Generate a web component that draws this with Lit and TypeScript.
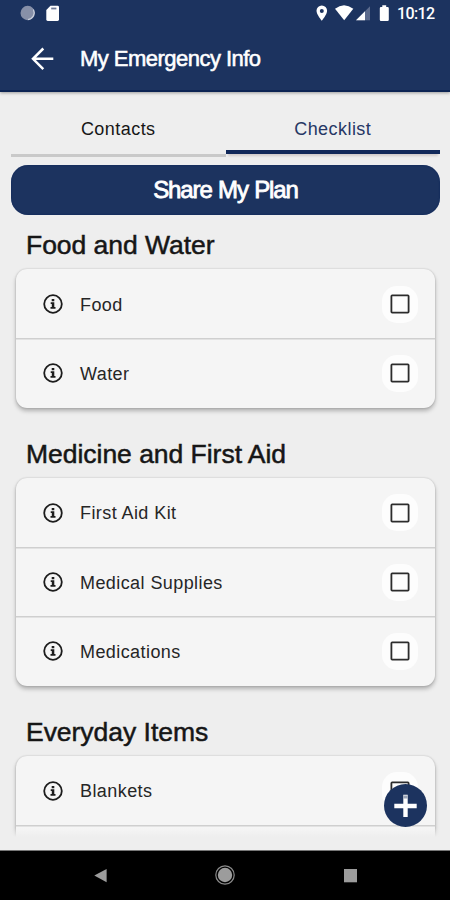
import { LitElement, html, css } from "lit";
import { customElement, property } from "lit/decorators.js";

interface Section {
  title: string;
  items: string[];
}

const SECTIONS: Section[] = [
  { title: "Food and Water", items: ["Food", "Water"] },
  { title: "Medicine and First Aid", items: ["First Aid Kit", "Medical Supplies", "Medications"] },
  { title: "Everyday Items", items: ["Blankets", ""] },
];

@customElement("status-bar")
export class StatusBar extends LitElement {
  static styles = css`
    :host {
      display: flex;
      justify-content: space-between;
      height: 27px;
      color: #fff;
      font: 500 16px/27px Roboto, sans-serif;
    }
    svg { display: block; }
    .right { display: flex; padding-right: 16px; }
    .time { width: 37px; letter-spacing: -0.6px; white-space: nowrap; }
  `;
  render() {
    return html`
      <svg width="80" height="27" viewBox="0 0 80 27">
        <circle cx="27.7" cy="13" r="7.2" fill="#8790a8" />
        <path d="M33.4 9.5A7 7 0 0 1 28 19.6" fill="none" stroke="#c9cedb" stroke-width="1.3" />
        <path d="M50.5 5.8H57.6Q59 5.8 59 7.2V19.6Q59 21 57.6 21H47.7Q46.3 21 46.3 19.6V10Z" fill="#fff" />
        <path d="M51.2 8.5H56.4" stroke="#6f7a96" stroke-width="1.8" />
      </svg>
      <div class="right">
        <svg width="82" height="27" viewBox="315 0 82 27">
          <path fill="#fff" fill-rule="evenodd" d="M321.8 5.5A5.3 5.3 0 0 1 327.1 10.8C327.1 14.6 321.8 20.7 321.8 20.7S316.5 14.6 316.5 10.8A5.3 5.3 0 0 1 321.8 5.5ZM321.8 8.9A2 2 0 1 0 321.8 12.9A2 2 0 1 0 321.8 8.9Z" />
          <path fill="#fff" d="M335 8.8Q344 1.8 353.3 8.8L344.2 20.3Z" />
          <path fill="#5c6b8d" d="M370 6.3V20.3H356Z" />
          <path fill="#fff" d="M365 11.3V20.3H356Z" />
          <path fill="#fff" d="M382.3 5.3H386.2V7H387.6Q388.8 7 388.8 8.2V19.8Q388.8 21 387.6 21H381Q379.8 21 379.8 19.8V8.2Q379.8 7 381 7H382.3Z" />
        </svg>
        <span class="time">10:12</span>
      </div>
    `;
  }
}

@customElement("check-row")
export class CheckRow extends LitElement {
  @property() label = "";
  static styles = css`
    :host {
      display: flex;
      align-items: center;
      box-sizing: border-box;
      height: 69.33px;
      padding: 1px 17px 0 27px;
      color: #262626;
      font: 18px "Liberation Sans", Arial, sans-serif;
      letter-spacing: 0.42px;
    }
    .label { flex: 1; padding: 2px 0 0 17px; }
    svg { display: block; }
    .check {
      display: grid;
      place-items: center;
      width: 36px;
      height: 37px;
      border-radius: 15px;
      background: #fdfdfd;
    }
  `;
  render() {
    return html`
      <svg width="20" height="20" viewBox="0 0 20 20">
        <circle cx="10" cy="10" r="8.8" fill="none" stroke="#1c1c1c" stroke-width="1.8" />
        <path d="M8.7 5H11.3V7.2H8.7ZM7.7 8.2H11.3V13H12.5V14.8H7.5V13H8.8V10H7.7Z" fill="#1c1c1c" />
      </svg>
      <span class="label">${this.label}</span>
      <span class="check">
        <svg width="20" height="20" viewBox="0 0 20 20">
          <rect x="1.4" y="1.4" width="17.2" height="17.2" rx="0.8" fill="none" stroke="#2c2c2c" stroke-width="1.8" />
        </svg>
      </span>
    `;
  }
}

@customElement("app-root")
export class AppRoot extends LitElement {
  static styles = css`
    :host {
      display: flex;
      flex-direction: column;
      position: relative;
      width: 450px;
      height: 900px;
      overflow: hidden;
      background: #eee;
      color: #161616;
      font-family: "Liberation Sans", Arial, sans-serif;
    }
    svg { display: block; }
    .header {
      flex: none;
      height: 92px;
      box-sizing: border-box;
      background: #1c335f;
      border-bottom: 2px solid #0c2453;
      box-shadow: 0 1px 3px rgba(0, 0, 0, 0.35);
    }
    .toolbar {
      display: flex;
      align-items: center;
      height: 63px;
      padding-left: 31px;
      color: #fff;
    }
    .title {
      padding: 1px 0 0 25px;
      font-size: 22px;
      letter-spacing: -0.53px;
      -webkit-text-stroke: 0.55px #fff;
    }
    .tabs {
      flex: none;
      display: flex;
      height: 65px;
      margin: 0 10px 0 11px;
    }
    .tab {
      flex: 1;
      box-sizing: border-box;
      padding-top: 5px;
      border-bottom: 3px solid #c9c9c9;
      text-align: center;
      font-size: 18px;
      line-height: 64px;
      letter-spacing: 0.45px;
    }
    .tab.active {
      height: 62px;
      border-bottom: 4px solid #12295a;
      color: #263765;
      box-shadow: 0 4px 2px -2px rgba(70, 30, 30, 0.16);
    }
    .share {
      flex: none;
      display: grid;
      place-items: center;
      height: 50px;
      margin: 8px 10px 0 11px;
      border-radius: 17px;
      background: #1c335f;
      box-shadow: inset 0 0 2px #0a2358;
      color: #fff;
      font-size: 24px;
      letter-spacing: -1.1px;
      word-spacing: 0.8px;
      -webkit-text-stroke: 0.8px #fff;
    }
    .list {
      height: 622px;
      flex: none;
      overflow: hidden;
      padding: 0 15px 0 16px;
      position: relative;
    }
    .list::after {
      content: "";
      position: absolute;
      left: 0;
      right: 0;
      bottom: 0;
      height: 9px;
      background: linear-gradient(rgba(238, 238, 238, 0), #eee);
    }
    .heading {
      height: 54px;
      box-sizing: border-box;
      padding: 1px 0 0 10px;
      font-size: 26.5px;
      line-height: 58px;
      letter-spacing: -0.03px;
      white-space: nowrap;
      -webkit-text-stroke: 0.5px #161616;
    }
    .card {
      margin-bottom: 16px;
      border-radius: 11px;
      background: #f5f5f5;
      box-shadow: 0 3px 4px rgba(0, 0, 0, 0.26), 0 0 2px rgba(0, 0, 0, 0.2);
    }
    .row + .row { box-shadow: inset 0 1.5px 0 #cfcfcf; }
    .fab {
      position: absolute;
      left: 384px;
      top: 783.5px;
      width: 43px;
      height: 43px;
    }
    .spacer { flex: 1; }
    .nav { flex: none; height: 50px; background: #000; border-top: 1px solid #777; box-sizing: border-box; }
  `;

  render() {
    return html`
      <div class="header">
        <status-bar></status-bar>
        <div class="toolbar">
          <svg width="24" height="24" viewBox="0 0 24 24" fill="none" stroke="#fff" stroke-width="2.5">
            <path d="M22.3 11.8H2M12.3 1.5L2 11.8L12.3 22.1" />
          </svg>
          <span class="title">My Emergency Info</span>
        </div>
      </div>
      <div class="tabs">
        <div class="tab">Contacts</div>
        <div class="tab active">Checklist</div>
      </div>
      <div class="share">Share My Plan</div>
      <div class="list">
        ${SECTIONS.map(
          (s) => html`
            <div class="heading">${s.title}</div>
            <div class="card">
              ${s.items.map((i) => html`<check-row class="row" .label=${i}></check-row>`)}
            </div>
          `
        )}
      </div>
      <div class="spacer"></div>
      <div class="nav">
        <svg width="450" height="49" viewBox="0 851 450 49">
          <path d="M94.3 875.5L106.6 869V882.2Z" fill="#9c9c9c" />
          <circle cx="225" cy="875" r="9.2" fill="none" stroke="#8a8a8a" stroke-width="1.2" />
          <circle cx="225" cy="875" r="7.2" fill="#9c9c9c" />
          <rect x="344" y="869" width="13" height="13.3" fill="#9c9c9c" />
        </svg>
      </div>
      <svg class="fab" viewBox="0 0 43 43">
        <circle cx="21.5" cy="21.5" r="21.5" fill="#1c335f" />
        <path d="M10.3 22H32.7M21.5 10.7V33" stroke="#fff" stroke-width="4.4" />
        <rect x="19.3" y="11.5" width="4.4" height="3" fill="#9aa3b5" />
      </svg>
    `;
  }
}
